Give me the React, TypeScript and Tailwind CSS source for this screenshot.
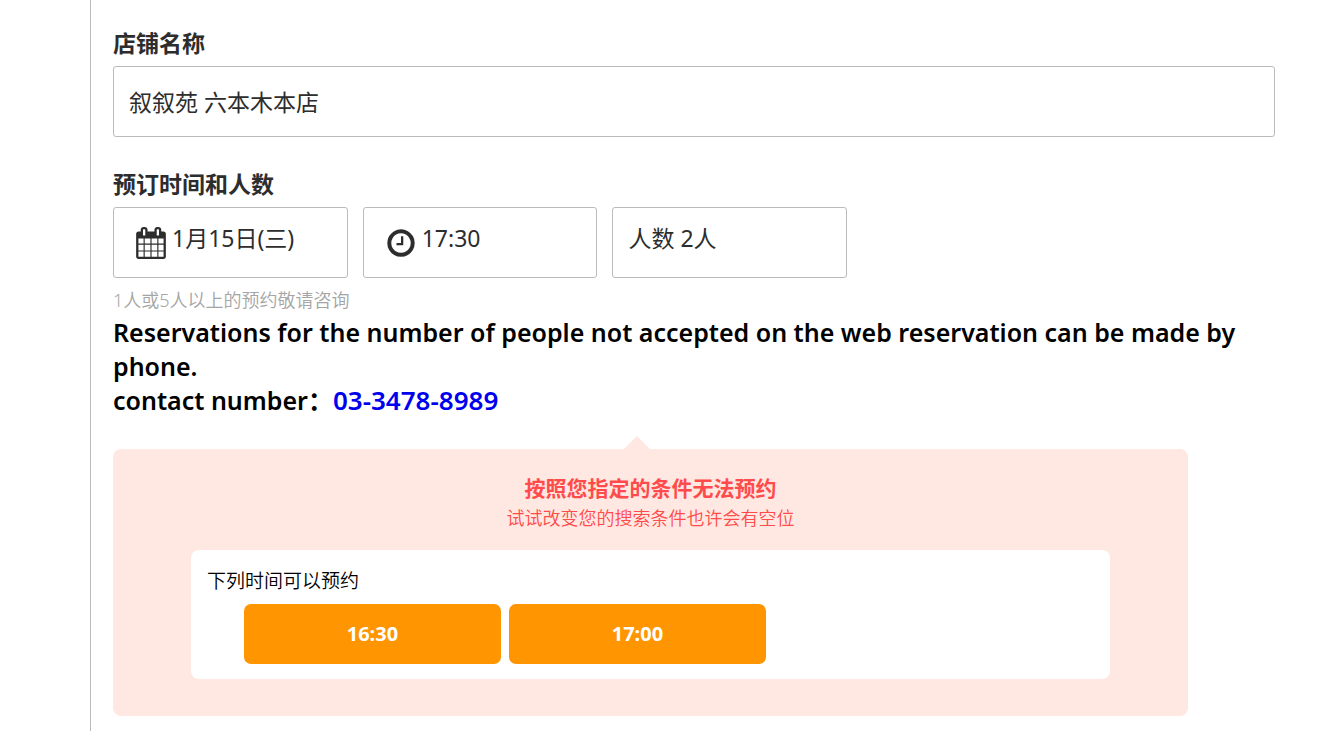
import type { ReactNode } from "react";

const slots = ["16:30", "17:00"];

function CalendarIcon() {
    return (
        <svg viewBox="0 0 1792 1792" className="h-8 w-8 shrink-0 fill-current" aria-hidden="true">
            <path d="M192 1664h288v-288h-288v288zm352 0h320v-288h-320v288zm-352-352h288v-320h-288v320zm352 0h320v-320h-320v320zm-352-384h288v-288h-288v288zm736 736h320v-288h-320v288zm-384-736h320v-288h-320v288zm768 736h288v-288h-288v288zm-384-352h320v-320h-320v320zm-352-864v-288q0-13-9.5-22.5t-22.5-9.5h-64q-13 0-22.5 9.5t-9.5 22.5v288q0 13 9.5 22.5t22.5 9.5h64q13 0 22.5-9.5t9.5-22.5zm736 864h288v-320h-288v320zm-384-384h320v-288h-320v288zm384 0h288v-288h-288v288zm32-480v-288q0-13-9.5-22.5t-22.5-9.5h-64q-13 0-22.5 9.5t-9.5 22.5v288q0 13 9.5 22.5t22.5 9.5h64q13 0 22.5-9.5t9.5-22.5zm384-64v1280q0 52-38 90t-90 38h-1408q-52 0-90-38t-38-90v-1280q0-52 38-90t90-38h128v-96q0-66 47-113t113-47h64q66 0 113 47t47 113v96h384v-96q0-66 47-113t113-47h64q66 0 113 47t47 113v96h128q52 0 90 38t38 90z" />
        </svg>
    );
}

function ClockIcon() {
    return (
        <svg viewBox="0 0 1792 1792" className="h-8 w-8 shrink-0 fill-current" aria-hidden="true">
            <path d="M1024 544v448q0 14-9 23t-23 9h-320q-14 0-23-9t-9-23v-64q0-14 9-23t23-9h224v-352q0-14 9-23t23-9h64q14 0 23 9t9 23zm416 352q0-148-73-273t-198-198-273-73-273 73-198 198-73 273 73 273 198 198 273 73 273-73 198-198 73-273zm224 0q0 209-103 385.5t-279.5 279.5-385.5 103-385.5-103-279.5-279.5-103-385.5 103-385.5 279.5-279.5 385.5-103 385.5 103 279.5 279.5 103 385.5z" />
        </svg>
    );
}

interface PickerProps {
    label: string;
    value: string;
    icon?: ReactNode;
}

function Picker({ label, value, icon }: PickerProps) {
    return (
        <div
            className={`flex h-[71px] w-[20.2%] items-center rounded-[3px] border border-[#bbb] ${icon ? "pl-[21px]" : "pl-[15px]"}`}
        >
            {icon}
            <select
                aria-label={label}
                className={`min-w-0 flex-1 appearance-none bg-transparent pb-2.5 text-[23px] leading-8 outline-none ${icon ? "pl-[5px]" : ""}`}
            >
                <option>{value}</option>
            </select>
        </div>
    );
}

export default function App() {
    return (
        <div className="min-h-screen bg-white pl-[90px] font-['Noto_Sans','Noto_Sans_CJK_SC',sans-serif] text-[#2d2d2d]">
            <main className="min-h-screen border-l border-[#bbb] pt-5 pr-[61px] pb-[15px] pl-[22px]">
                {/* Restaurant */}
                <label htmlFor="shop" className="block text-[23px] leading-[46px] font-bold">
                    店铺名称
                </label>
                <input
                    id="shop"
                    readOnly
                    value="叙叙苑 六本木本店"
                    className="block h-[71px] w-full rounded-[3px] border border-[#bbb] px-[15px] pb-0.5 text-[23px] outline-none"
                />

                {/* Date, time and party size */}
                <h2 className="mt-6 text-[23px] leading-[46px] font-bold">预订时间和人数</h2>
                <div className="flex gap-[15px]">
                    <Picker label="日期" value="1月15日(三)" icon={<CalendarIcon />} />
                    <Picker label="时间" value="17:30" icon={<ClockIcon />} />
                    <Picker label="人数" value="人数 2人" />
                </div>
                <p className="pt-[7px] text-lg leading-[30px] font-[350] text-[#a5a5a5]">
                    1人或5人以上的预约敬请咨询
                </p>
                <p className="text-[25px] leading-[34px] font-semibold text-black">
                    Reservations for the number of people not accepted on the web reservation can be made by phone.
                    <br />
                    contact number：
                    <a href="tel:03-3478-8989" className="text-[26px] text-[#0000ee]">
                        03-3478-8989
                    </a>
                </p>

                {/* No availability */}
                <section className="relative mt-8 w-[92.5%] rounded-lg bg-[#ffe8e1] pt-6 pb-[37px]">
                    <div className="absolute -top-[13px] left-[47.5%] border-x-[13px] border-b-[13px] border-x-transparent border-b-[#ffe8e1]" />
                    <div className="text-center text-[#ff4b4b]">
                        <p className="text-[21px] leading-[30px] font-bold">按照您指定的条件无法预约</p>
                        <p className="text-lg leading-[30px] font-[350]">试试改变您的搜索条件也许会有空位</p>
                    </div>
                    <div className="mx-auto mt-[17px] w-[85.5%] rounded-lg bg-white px-4 pt-3 pb-[15px]">
                        <p className="text-[19px] leading-[38px] font-[350] text-black">下列时间可以预约</p>
                        <div className="mt-1 flex gap-2 pl-[37px]">
                            {slots.map((slot) => (
                                <button
                                    key={slot}
                                    type="button"
                                    className="h-[60px] w-[257px] rounded-[7px] bg-[#ff9500] text-xl font-bold text-white"
                                >
                                    {slot}
                                </button>
                            ))}
                        </div>
                    </div>
                </section>
            </main>
        </div>
    );
}
